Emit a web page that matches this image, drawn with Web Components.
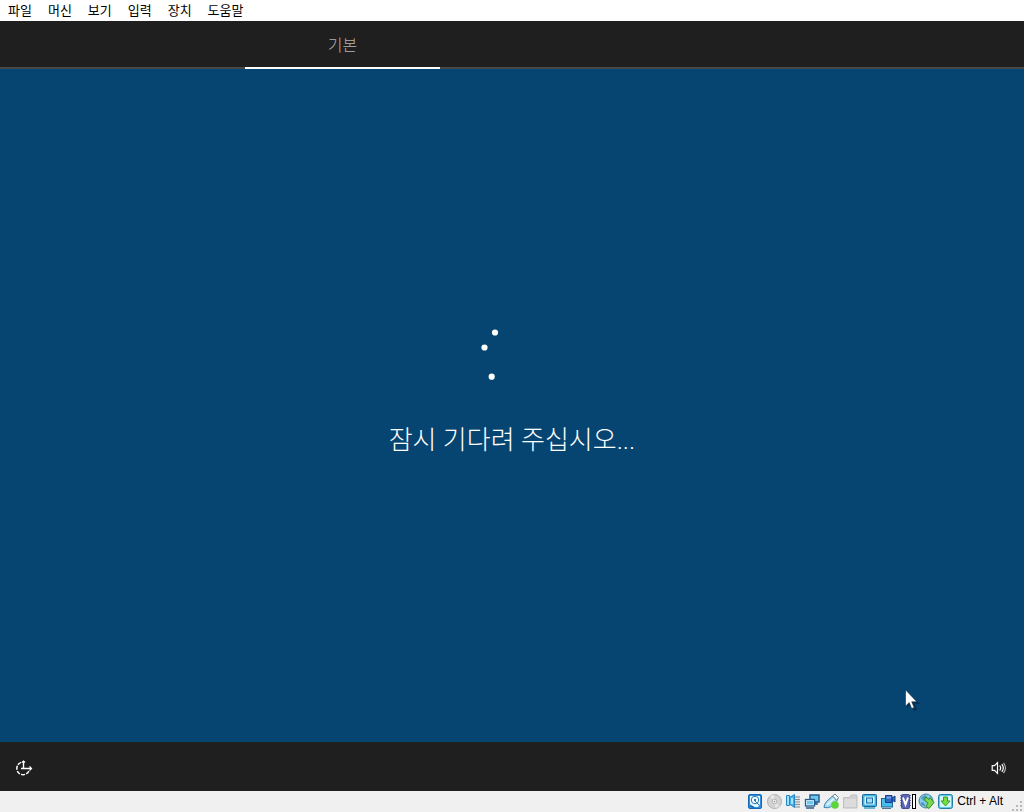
<!DOCTYPE html>
<html lang="ko">
<head>
<meta charset="utf-8">
<meta name="viewport" content="width=device-width, initial-scale=1">
<title>잠시 기다려 주십시오</title>
<style>
html, body { margin: 0; height: 100%; }
body { font-family: "Noto Sans CJK KR", sans-serif; }
</style>
</head>
<body>
<vm-window></vm-window>
<script>
function define(name, html) {
  const t = document.createElement('template');
  t.innerHTML = html;
  customElements.define(name, class extends HTMLElement {
    constructor() {
      super();
      this.attachShadow({ mode: 'open' }).append(t.content.cloneNode(true));
    }
  });
}

define('vm-menu-item', `
<style>
:host { display: block; }
button { display: block; border: 0; margin: 0; padding: 0 8px; height: 19px; background: none; color: #000; font: inherit; line-height: 19px; }
</style>
<button type="button"><slot></slot></button>`);

define('vm-menubar', `
<style>
:host { display: block; flex: none; background: #fff; font-size: 13px; }
nav { display: flex; height: 21px; }
</style>
<nav aria-label="메뉴">
  <vm-menu-item>파일</vm-menu-item><vm-menu-item>머신</vm-menu-item><vm-menu-item>보기</vm-menu-item>
  <vm-menu-item>입력</vm-menu-item><vm-menu-item>장치</vm-menu-item><vm-menu-item>도움말</vm-menu-item>
</nav>`);

define('setup-tabs', `
<style>
:host { display: block; flex: none; background: #1f1f1f; box-shadow: inset 0 -2px #484848; }
div { display: grid; grid-template-columns: 245fr 195fr 584fr; height: 48px; }
button { grid-column: 2; border: 0; border-bottom: 2px solid #fff; padding: 0; background: none; color: #b4b4b4; font: 300 16px/46px "Noto Sans CJK KR", sans-serif; }
</style>
<div role="tablist"><button type="button" role="tab" aria-selected="true">기본</button></div>`);

define('progress-dots', `
<style>:host { display: block; } svg { display: block; }</style>
<svg width="64" height="64" fill="#fff" aria-hidden="true">
  <circle cx="15" cy="8.5" r="3.1"/><circle cx="4.5" cy="23.5" r="3.1"/><circle cx="11.7" cy="52.7" r="3.1"/>
</svg>`);

define('mouse-pointer', `
<style>:host { display: block; } svg { display: block; }</style>
<svg width="15" height="23" aria-hidden="true">
  <path d="M2 2v17l4-3 3 6 3-1-2-6h5z" fill="#001a30" opacity=".45"/>
  <path d="M.5.8v16.4l3.7-3.6 2.5 5.9 2.5-1.1-2.5-5.6h5.2z" fill="#fff" stroke="#10283c" stroke-width=".6"/>
</svg>`);

define('setup-stage', `
<style>
:host { position: relative; display: flex; flex: 1; flex-direction: column; align-items: center; justify-content: center; gap: 32px; box-sizing: border-box; padding-bottom: 28px; background: #064571; color: #fff; }
p { margin: 0; font: 300 26px/40px Roboto, "Noto Sans CJK KR", sans-serif; }
mouse-pointer { position: absolute; right: 104px; bottom: 30px; }
</style>
<progress-dots></progress-dots>
<p role="status">잠시 기다려 주십시오...</p>
<mouse-pointer></mouse-pointer>`);

define('setup-footer', `
<style>
:host { display: flex; flex: none; justify-content: space-between; align-items: center; height: 49px; padding: 2px 16px 0 14px; box-sizing: border-box; background: #1f1f1f; }
button { display: block; border: 0; padding: 0; background: none; }
svg { display: block; }
</style>
<button type="button" aria-label="접근성">
  <svg width="20" height="20" fill="none" stroke="#fff">
    <path d="M7.2 4.4A6.3 6.3 0 1 0 15.2 12" stroke-width="1.5" stroke-dasharray="4 1.2"/>
    <path d="M9.5 3v7.5M7 10.5H17" stroke-width="1.4"/>
    <path d="M8 4.5l1.5-1.5L11 4.5M15.5 8.5l2 2-2 2" stroke-width="1.2"/>
  </svg>
</button>
<button type="button" aria-label="볼륨">
  <svg width="18" height="18" fill="none" stroke="#fff" stroke-width="1.2">
    <path d="M2.2 6.7h2.3l3-3v10.6l-3-3H2.2z"/>
    <path d="M9.7 6.5q2 2.5 0 5M11.8 5.1q3 3.9 0 7.8" />
    <path d="M13.5 3.8q4 5.2 0 10.4" stroke="#aaa"/>
  </svg>
</button>`);

const icons = [
['하드 디스크', `<rect x="1.5" y="1.5" width="13" height="14" rx="1.5" fill="#2f8fdc" stroke="#1268b3"/><path d="M3 3h10v8l-2 3H5l-2-3z" fill="#e4f6ff"/><circle cx="8" cy="7" r="3.7" fill="#fff" stroke="#2675ae"/><circle cx="8" cy="7" r="1.2" fill="#1b77bc"/><path d="M8 8l4 4" stroke="#1b77bc"/><path d="M3 12.5l4 2" stroke="#1268b3" stroke-width="1.5"/>`],
['광 디스크', `<circle cx="8.5" cy="8.5" r="7" fill="#d3d3d3" stroke="#b0b0b0"/><path d="M8.5 8.5L4 3.5a7 7 0 0 1 4-2zM8.5 8.5l5 4.5a7 7 0 0 1-4 2z" fill="#e6e6e6"/><circle cx="8.5" cy="8.5" r="2.3" fill="#eee" stroke="#b4b4b4"/><circle cx="8.5" cy="8.5" r=".7" fill="#888"/>`],
['오디오', `<path d="M10 2.5h5v12h-5z" fill="#dfe2e5"/><path d="M10 4h5M10 6.5h5M10 9h5M10 11.5h5M10 14h5" stroke="#8a9096"/><path d="M1.5 2.5h3v10h-3z" fill="#9be0fb" stroke="#2587c0"/><path d="M4.5 4.5l5-3v13l-5-3.5z" fill="#45b0ea" stroke="#2587c0"/><path d="M7 5v6" stroke="#c9f2ff" stroke-width="1.5"/>`],
['네트워크', `<rect x="6" y="2" width="9" height="7" fill="#6bc6ef" stroke="#245c8e" stroke-width="1.5"/><path d="M8 11h6M12 9v2" stroke="#345d83" stroke-width="1.5"/><rect x="1.5" y="6.5" width="9" height="6.5" fill="#e5faff" stroke="#245c8e" stroke-width="1.3"/><path d="M3 8h6v3.5H3z" fill="#6ec9f0"/><path d="M2 15h8" stroke="#345d83" stroke-width="1.5"/>`],
['USB', `<path d="M1 14.5Q1 11 3.5 8.5L9.5 3l4.5 4.5-5.5 6q-3 2-7.5 1z" fill="#a5dbef" stroke="#3a86b0"/><path d="M9.5 3L12 1l3.5 3.5L14 7.5z" fill="#eef8fa" stroke="#657f8d"/><path d="M4 12l7-6.5" stroke="#e9fbff" stroke-width="1.5"/><circle cx="12" cy="12" r="3.8" fill="#5dd43a"/>`],
['공유 폴더', `<path d="M1.5 4.5h6L9 2h5q1 0 1 1v12H1.5z" fill="#d0d0d0" stroke="#c0c0c0"/><path d="M2.5 6H14v8H2.5z" fill="#dcdcdc"/>`],
['디스플레이', `<rect x="1.5" y="1.5" width="14" height="12" rx="1" fill="#3fb5df" stroke="#17679a"/><rect x="3.5" y="3.5" width="10" height="8" fill="#d9f7ff"/><rect x="5.5" y="5" width="6" height="5" fill="#9ee2f7" stroke="#17679a"/><path d="M3 15h11" stroke="#42a2c6" stroke-width="1.5"/>`],
['녹화', `<rect x="1.5" y="5.5" width="11" height="8.5" fill="#48bce8" stroke="#17679a"/><path d="M2 15.5h9" stroke="#547386"/><path d="M5.5 2.5H12v7H5.5z" fill="#3269c4" stroke="#173d86"/><path d="M12 5l3-2v6l-3-2z" fill="#3269c4" stroke="#173d86"/><path d="M6.5 3.5H11v2H6.5z" fill="#79a7e9"/>`],
['CPU', `<path d="M1 2.5h11M1 5h11M1 7.5h11M1 10h11M1 12.5h11" stroke="#7774a4"/><rect x="2.5" y="1.5" width="8" height="14" rx="1" fill="#5a65b5" stroke="#444b91"/><path d="M4 4.5l2.5 7 2.5-7" fill="none" stroke="#fff" stroke-width="2"/><rect x="13.5" y="1.5" width="3" height="14" fill="#fff" stroke="#000"/>`],
['마우스 통합', `<circle cx="8" cy="8" r="7" fill="#80ccea" stroke="#43839f"/><path d="M2 11q2-3 4-1l2 4M3 5l4-3 2 2-3 4z" fill="#5397bb"/><path d="M8 4q-2 2-1 4l3 2-2 3.5 3 2 5-6-4-5-1 2z" fill="#78d951" stroke="#398a29"/>`],
['키보드', `<rect x="1.5" y="1.5" width="14" height="14" rx="2" fill="#60c8eb" stroke="#237ea9"/><rect x="3" y="3" width="11" height="11" rx="1" fill="#d5f7fb"/><path d="M6.5 4h4v4H13l-4.5 5L4 8h2.5z" fill="#78dd43" stroke="#3b9a29"/>`]
];

define('vm-statusbar', `
<style>
:host { display: flex; flex: none; justify-content: flex-end; height: 21px; background: #f0f0f0; color: #000; }
ul { display: flex; gap: 3px; margin: 0; padding: 2px 4px 0 0; list-style: none; }
svg { display: block; overflow: visible; }
span { font: 12px/21px "Liberation Sans", sans-serif; }
.grip { align-self: flex-end; margin: 0 2px 1px 9px; }
</style>
<ul>${icons.map(([n, d]) => `<li><svg width="16" height="16" role="img" aria-label="${n}" fill="none">${d}</svg></li>`).join('')}</ul>
<span>Ctrl + Alt</span>
<svg class="grip" width="10" height="10" fill="#b8b8b8" aria-hidden="true"><path d="M8 0h2v2H8zM4 4h2v2H4zM8 4h2v2H8zM0 8h2v2H0zM4 8h2v2H4zM8 8h2v2H8z"/></svg>`);

define('vm-window', `
<style>:host { display: flex; flex-direction: column; min-height: 100vh; }</style>
<vm-menubar></vm-menubar>
<setup-tabs></setup-tabs>
<setup-stage></setup-stage>
<setup-footer></setup-footer>
<vm-statusbar></vm-statusbar>`);
</script>
</body>
</html>
